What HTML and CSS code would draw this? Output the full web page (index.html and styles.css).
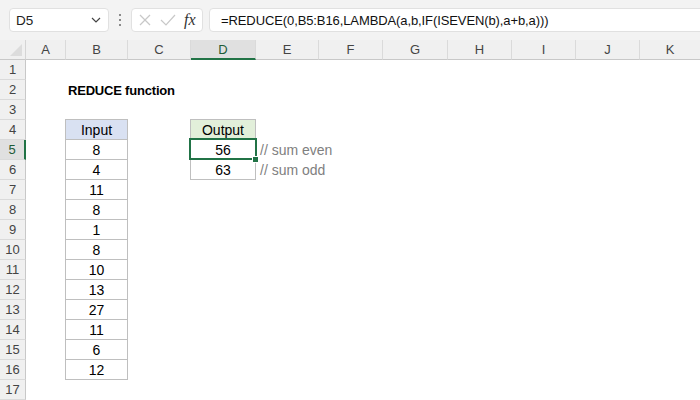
FILE: index.html
```html
<!DOCTYPE html>
<html lang="en">
  <head>
    <meta charset="UTF-8" />
    <title>REDUCE function</title>
    <link rel="stylesheet" href="styles.css">
  </head>
  <body>
    <div class="toolbar">
      <div class="namebox">
        <span>D5</span>
        <svg width="10" height="6" viewBox="0 0 10 6" fill="none" stroke="#444" stroke-width="1.2">
          <polyline points="1 1 5 5 9 1"></polyline>
        </svg>
      </div>
      <div class="grip">
        <span></span><span></span><span></span>
      </div>
      <div class="fxbox">
        <svg width="12" height="12" viewBox="0 0 12 12" stroke="#c8c8c8" stroke-width="1.2">
          <line x1="1" y1="1" x2="11" y2="11"></line>
          <line x1="11" y1="1" x2="1" y2="11"></line>
        </svg>
        <svg width="16" height="12" viewBox="0 0 16 12" fill="none" stroke="#c8c8c8" stroke-width="1.2">
          <polyline points="1 6 6 11 15 1"></polyline>
        </svg>
        <span class="fx">fx</span>
      </div>
      <div class="formula">=REDUCE(0,B5:B16,LAMBDA(a,b,IF(ISEVEN(b),a+b,a)))</div>
    </div>

    <div class="sheet">
      <div class="corner"><span class="tri"></span></div>
      <div class="col-hdr">A</div>
      <div class="col-hdr">B</div>
      <div class="col-hdr">C</div>
      <div class="col-hdr active">D</div>
      <div class="col-hdr">E</div>
      <div class="col-hdr">F</div>
      <div class="col-hdr">G</div>
      <div class="col-hdr">H</div>
      <div class="col-hdr">I</div>
      <div class="col-hdr">J</div>
      <div class="col-hdr last">K</div>

      <div class="row-hdr">1</div>
      <div class="row-hdr">2</div>
      <div class="row-hdr">3</div>
      <div class="row-hdr">4</div>
      <div class="row-hdr active">5</div>
      <div class="row-hdr">6</div>
      <div class="row-hdr">7</div>
      <div class="row-hdr">8</div>
      <div class="row-hdr">9</div>
      <div class="row-hdr">10</div>
      <div class="row-hdr">11</div>
      <div class="row-hdr">12</div>
      <div class="row-hdr">13</div>
      <div class="row-hdr">14</div>
      <div class="row-hdr">15</div>
      <div class="row-hdr">16</div>
      <div class="row-hdr">17</div>

      <div class="title">REDUCE function</div>

      <div class="data input-table">
        <div class="cell head-blue">Input</div>
        <div class="cell">8</div>
        <div class="cell">4</div>
        <div class="cell">11</div>
        <div class="cell">8</div>
        <div class="cell">1</div>
        <div class="cell">8</div>
        <div class="cell">10</div>
        <div class="cell">13</div>
        <div class="cell">27</div>
        <div class="cell">11</div>
        <div class="cell">6</div>
        <div class="cell">12</div>
      </div>

      <div class="data output-table">
        <div class="cell head-green">Output</div>
        <div class="cell selected">56<span class="handle"></span></div>
        <div class="cell">63</div>
      </div>

      <div class="notes">
        <div class="note">// sum even</div>
        <div class="note">// sum odd</div>
      </div>
    </div>
  </body>
</html>
```

FILE: styles.css
```css
body {
  margin: 0;
  font-family: "Liberation Sans", Arial, sans-serif;
  background-color: white;
  width: 700px;
  height: 400px;
  overflow: hidden;
}
.toolbar {
  height: 40px;
  box-sizing: border-box;
  padding: 8px 0 8px 9px;
  display: flex;
  align-items: stretch;
  background-color: #f3f3f3;
}
.namebox {
  width: 100px;
  box-sizing: border-box;
  background-color: white;
  border: 1px solid #e1e1e1;
  border-radius: 4px;
  display: flex;
  align-items: center;
  justify-content: space-between;
  padding: 0 7px 0 6px;
  font-size: 13.5px;
  color: #222;
}
.grip {
  width: 22px;
  display: flex;
  flex-direction: column;
  align-items: center;
  justify-content: center;
  gap: 3px;
}
.grip span {
  width: 2px;
  height: 2px;
  background-color: #8a8a8a;
}
.fxbox {
  width: 72px;
  box-sizing: border-box;
  background-color: white;
  border: 1px solid #e1e1e1;
  border-radius: 4px;
  display: flex;
  align-items: center;
  padding: 0 4px 0 7px;
  gap: 9px;
}
.fx {
  font-family: "Liberation Serif", "Times New Roman", serif;
  font-style: italic;
  font-size: 16px;
  color: #333;
  margin-left: -1px;
}
.formula {
  flex: 1;
  margin-left: 6px;
  margin-right: -4px;
  background-color: white;
  border: 1px solid #e1e1e1;
  border-radius: 4px;
  display: flex;
  align-items: center;
  padding-left: 11px;
  font-size: 13px;
  letter-spacing: -0.1px;
  color: #111;
}
.sheet {
  display: grid;
  grid-template-columns: 26px 40px 62px 63px 65px 63px 64px 65px 64px 64px 64px 1fr;
  grid-template-rows: repeat(18, 20px);
}
.corner,
.col-hdr,
.row-hdr {
  background-color: #f0f0f0;
  box-sizing: border-box;
  color: #444;
  font-size: 13px;
  display: flex;
  align-items: center;
  justify-content: center;
}
.corner {
  border-right: 1px solid #d4d4d4;
  border-bottom: 1px solid #c8c8c8;
  position: relative;
}
.tri {
  position: absolute;
  right: 3px;
  bottom: 3px;
  width: 0;
  height: 0;
  border-left: 12px solid transparent;
  border-bottom: 12px solid #dcdcdc;
}
.col-hdr {
  border-right: 1px solid #dadada;
  border-bottom: 1px solid #c8c8c8;
}
.col-hdr.last {
  border-right: none;
}
.col-hdr.active {
  background-color: #e0e0e0;
  border-bottom: 2px solid #217346;
  color: #1e5c38;
}
.row-hdr {
  grid-column: 1;
  border-right: 1px solid #c8c8c8;
  border-bottom: 1px solid #dadada;
}
.row-hdr.active {
  background-color: #e0e0e0;
  border-right: 2px solid #217346;
  color: #1e5c38;
}
.title {
  grid-column: 3 / span 3;
  grid-row: 3;
  font-weight: bold;
  font-size: 13px;
  letter-spacing: -0.2px;
  padding-left: 2px;
  display: flex;
  align-items: center;
  white-space: nowrap;
}
.data {
  margin: -1px 0 0 -1px;
  border-left: 1px solid #bfbfbf;
  border-top: 1px solid #bfbfbf;
  align-self: start;
}
.input-table {
  grid-column: 3;
  grid-row: 5 / span 13;
}
.output-table {
  grid-column: 5;
  grid-row: 5 / span 3;
}
.cell {
  height: 20px;
  box-sizing: border-box;
  border-right: 1px solid #bfbfbf;
  border-bottom: 1px solid #bfbfbf;
  display: flex;
  align-items: center;
  justify-content: center;
  font-size: 14px;
  color: #000;
  position: relative;
}
.head-blue {
  background-color: #d9e1f2;
}
.head-green {
  background-color: #e2efda;
}
.cell.selected::after {
  content: "";
  position: absolute;
  top: -2px;
  left: -2px;
  right: -2px;
  bottom: -1px;
  border: 2px solid #217346;
}
.handle {
  position: absolute;
  right: -4px;
  bottom: -4px;
  width: 5px;
  height: 5px;
  background-color: #217346;
  border: 1px solid white;
  z-index: 2;
}
.notes {
  grid-column: 6 / span 3;
  grid-row: 6 / span 2;
  padding-left: 4px;
}
.note {
  height: 20px;
  display: flex;
  align-items: center;
  font-size: 14px;
  color: #808080;
  white-space: nowrap;
}
```
